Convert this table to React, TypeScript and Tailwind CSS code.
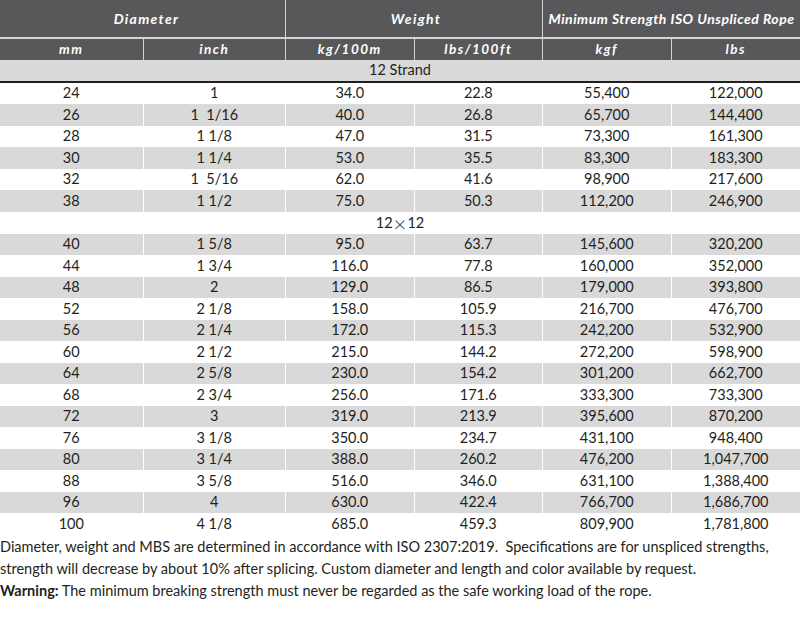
import React from "react";

type Row = [string, string, string, string, string, string];

const sec1: Row[] = [
  ["24", "1", "34.0", "22.8", "55,400", "122,000"],
  ["26", "1  1/16", "40.0", "26.8", "65,700", "144,400"],
  ["28", "1 1/8", "47.0", "31.5", "73,300", "161,300"],
  ["30", "1 1/4", "53.0", "35.5", "83,300", "183,300"],
  ["32", "1  5/16", "62.0", "41.6", "98,900", "217,600"],
  ["38", "1 1/2", "75.0", "50.3", "112,200", "246,900"],
];

const sec2: Row[] = [
  ["40", "1 5/8", "95.0", "63.7", "145,600", "320,200"],
  ["44", "1 3/4", "116.0", "77.8", "160,000", "352,000"],
  ["48", "2", "129.0", "86.5", "179,000", "393,800"],
  ["52", "2 1/8", "158.0", "105.9", "216,700", "476,700"],
  ["56", "2 1/4", "172.0", "115.3", "242,200", "532,900"],
  ["60", "2 1/2", "215.0", "144.2", "272,200", "598,900"],
  ["64", "2 5/8", "230.0", "154.2", "301,200", "662,700"],
  ["68", "2 3/4", "256.0", "171.6", "333,300", "733,300"],
  ["72", "3", "319.0", "213.9", "395,600", "870,200"],
  ["76", "3 1/8", "350.0", "234.7", "431,100", "948,400"],
  ["80", "3 1/4", "388.0", "260.2", "476,200", "1,047,700"],
  ["88", "3 5/8", "516.0", "346.0", "631,100", "1,388,400"],
  ["96", "4", "630.0", "422.4", "766,700", "1,686,700"],
  ["100", "4 1/8", "685.0", "459.3", "809,900", "1,781,800"],
];

const widths = [
  "w-[142.5px]",
  "w-[142.5px]",
  "w-[128.5px]",
  "w-[128.5px]",
  "w-[128.5px]",
  "w-[129.5px]",
];

function DataRow({ row, grey }: { row: Row; grey: boolean }) {
  return (
    <div className={`flex h-[21.5px] ${grey ? "bg-[#d9d9da]" : "bg-white"}`}>
      {row.map((c, i) => (
        <div
          key={i}
          className={`${widths[i]} shrink-0 flex items-center justify-center whitespace-pre ${
            i > 0 ? "border-l-[1.5px] border-white" : ""
          }`}
        >
          {c}
        </div>
      ))}
    </div>
  );
}

const hdr = "text-white font-bold italic";

export default function App() {
  return (
    <div
      className="w-[800px] h-[626px] bg-white text-[#231f20] text-[14.5px] overflow-hidden"
      style={{ fontFamily: "Lato, 'Open Sans', sans-serif" }}
    >
      {/* header row 1 */}
      <div className="flex h-[37px] bg-[#58585a]">
        <div className={`w-[285px] shrink-0 flex items-center justify-center pl-[8px] ${hdr} text-[14px] tracking-[1.3px]`}>
          Diameter
        </div>
        <div className={`w-[257px] shrink-0 flex items-center justify-center border-l-[1.5px] border-[#d4d4d4] pl-[4px] ${hdr} text-[14px] tracking-[1.3px]`}>
          Weight
        </div>
        <div className={`w-[258px] shrink-0 flex items-center justify-center border-l-[1.5px] border-[#d4d4d4] ${hdr} text-[14px] tracking-[0.5px] whitespace-nowrap`}>
          Minimum Strength ISO Unspliced Rope
        </div>
      </div>
      <div className="h-[1.5px] bg-[#d4d4d4]" />
      {/* header row 2 */}
      <div className="flex h-[21px] bg-[#58585a]">
        {["mm", "inch", "kg/100m", "lbs/100ft", "kgf", "lbs"].map((t, i) => (
          <div
            key={t}
            className={`${widths[i]} shrink-0 flex items-center justify-center ${hdr} text-[13.5px] tracking-[1.5px] ${
              i > 0 ? "border-l-[1.5px] border-[#d4d4d4]" : ""
            }`}
          >
            {t}
          </div>
        ))}
      </div>
      {/* strand */}
      <div className="h-[21px] bg-[#d9d9da] flex items-center justify-center">12 Strand</div>
      <div className="h-[2px] bg-[#231f20]" />
      {sec1.map((r, i) => (
        <DataRow key={r[0]} row={r} grey={i % 2 === 1} />
      ))}
      <div className="h-[22px] bg-white flex items-center justify-center">
        12<span className="text-[22px] font-light leading-none mx-[1px] relative top-[1px]">×</span>12
      </div>
      {sec2.map((r, i) => (
        <DataRow key={r[0]} row={r} grey={i % 2 === 0} />
      ))}
      <div className="leading-[22px] pt-[1px]">
        Diameter, weight and MBS are determined in accordance with ISO 2307:2019.&nbsp; Specifications are for unspliced strengths,
        <br />
        strength will decrease by about 10% after splicing. Custom diameter and length and color available by request.
        <br />
        <span className="font-bold">Warning:</span> The minimum breaking strength must never be regarded as the safe working load of the rope.
      </div>
    </div>
  );
}
